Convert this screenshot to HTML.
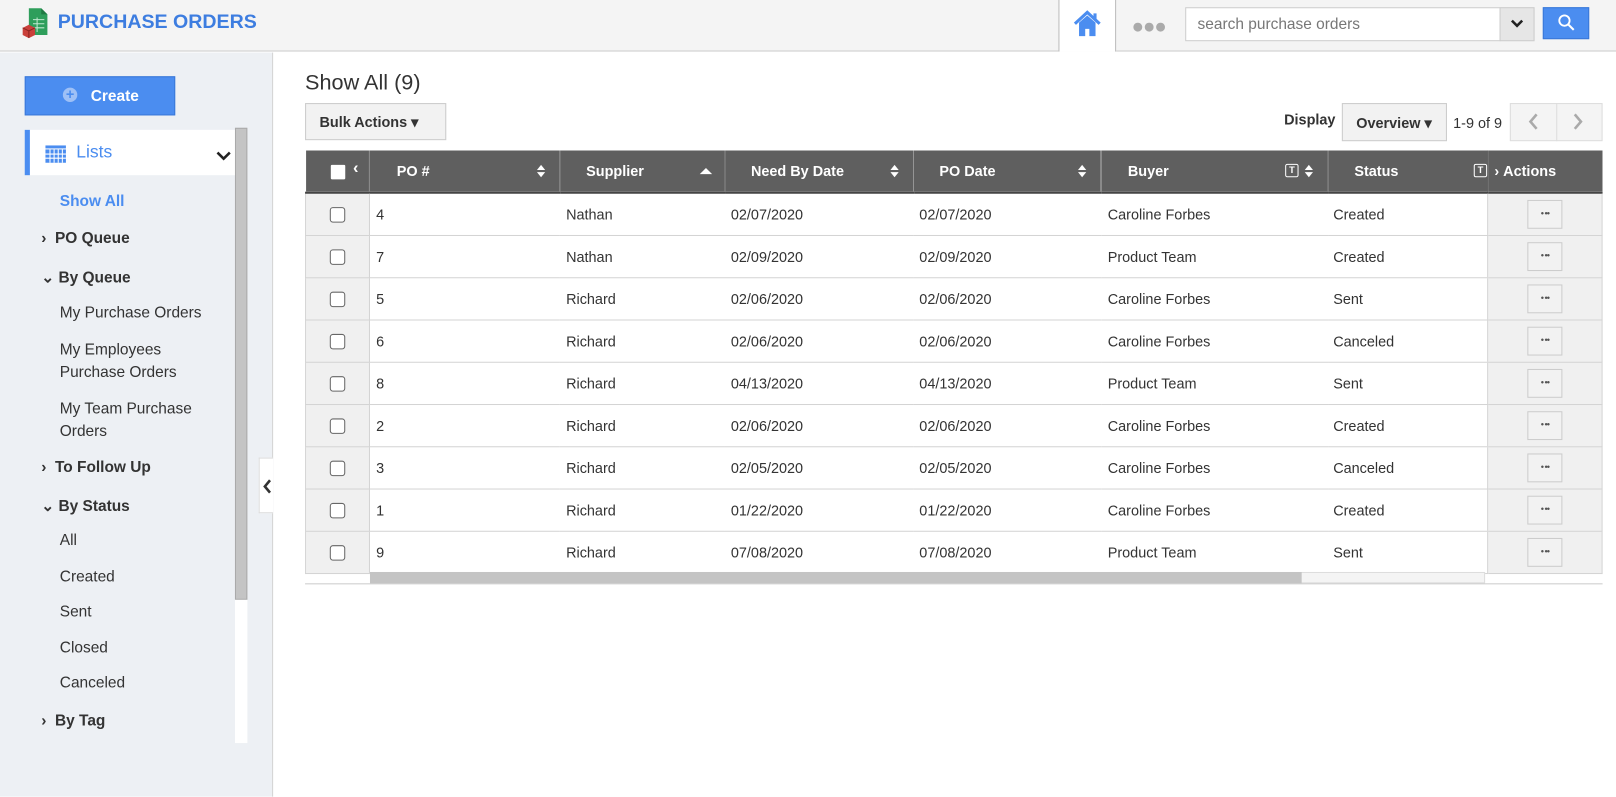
<!DOCTYPE html>
<html><head><meta charset="utf-8"><style>
*{box-sizing:border-box;margin:0;padding:0}
body{width:1616px;height:795px;position:relative;font-family:"Liberation Sans",Arial,sans-serif;background:#fff;overflow:hidden;color:#333}
#w{position:absolute;left:0;top:0;width:1568px;height:772px;transform:scale(1.0306);transform-origin:0 0}
.top{position:absolute;left:0;top:0;width:1568px;height:50px;background:#f4f4f4;border-bottom:1px solid #ccc}
.title{position:absolute;left:56px;top:11px;font-size:19px;font-weight:bold;color:#3d7de0}
.side{position:absolute;left:0;top:51px;width:265px;height:722px;background:#edf0f4;border-right:1px solid #d4d4d4}
.a{position:absolute}
.nav{position:absolute;font-size:15px;color:#333}
.b{font-weight:bold}
th,td{font-size:14px}
table{border-collapse:collapse;position:absolute;left:296px;top:146px;width:1259px}
th{background:#5f5f5f;color:#fff;height:41px;text-align:left;font-weight:bold;border-left:1px solid #888;border-bottom:2px solid #444;position:relative}
td{height:41px;border-bottom:1px solid #d4d4d4;color:#333}
td.cb{background:#f0f0f0;border-left:1px solid #d4d4d4;border-right:1px solid #d4d4d4;text-align:center}
td.ac{background:#f0f0f0;border-left:1px solid #d4d4d4;border-right:1px solid #d4d4d4;text-align:center}
.box{display:inline-block;width:15px;height:15px;border:1px solid #666;border-radius:3px;background:#fff;vertical-align:middle}
.dots{display:inline-block;width:34px;height:28px;border:1px solid #ccc;background:#f2f2f2;font-size:9px;line-height:24px;color:#555;letter-spacing:-1px}
.srt{position:absolute;right:14px;top:14px;width:8px}
.srt:before{content:"";position:absolute;left:0;top:0;border:4px solid transparent;border-bottom:5px solid #fff;border-top:0}
.srt:after{content:"";position:absolute;left:0;top:7px;border:4px solid transparent;border-top:5px solid #fff;border-bottom:0}
.flt{position:absolute;top:13px;width:13px;height:13px;border:1px solid #fff;border-radius:2px;font-size:9px;line-height:11px;text-align:center}
</style></head><body><div id="w">
<div class="top">
<svg class="a" style="left:20px;top:7px" width="28" height="30" viewBox="0 0 28 30"><path d="M8 1h12l6 6v20H8z" fill="#2e9e5b"/><path d="M20 1v6h6" fill="#1f7a43"/><g stroke="#bfe8cf" stroke-width="1"><path d="M12 12h11M12 16h11M12 20h11M16 10v14"/></g><path d="M2 20l6-3 6 3v7l-6 3-6-3z" fill="#c9403a"/><path d="M2 20l6 3 6-3M8 23v7" stroke="#8a2420" fill="none"/></svg>
<div class="title">PURCHASE ORDERS</div>
<div class="a" style="left:1027px;top:0;width:56px;height:50px;background:#fff;border-left:1px solid #bbb;border-right:1px solid #bbb"></div>
<svg class="a" style="left:1041px;top:9px" width="28" height="28" viewBox="0 0 28 28"><path d="M2 14L14 3l12 11" fill="none" stroke="#4b8df0" stroke-width="3"/><path d="M6 13v13h6v-7h4v7h6V13L14 6z" fill="#4b8df0"/><rect x="20" y="4" width="3" height="6" fill="#4b8df0"/></svg>
<div class="a" style="left:1098px;top:15px;font-size:20px;color:#aaa;letter-spacing:-1px">●●●</div>
<div class="a" style="left:1150px;top:7px;width:306px;height:33px;background:#fff;border:1px solid #ccc;font-size:15px;color:#777;padding:7px 11px">search purchase orders</div>
<div class="a" style="left:1455px;top:7px;width:34px;height:33px;background:#e6e6e6;border:1px solid #ccc"></div>
<svg class="a" style="left:1465px;top:17px" width="14" height="12"><path d="M2 3l5 5 5-5" stroke="#222" stroke-width="2.5" fill="none"/></svg>
<div class="a" style="left:1497px;top:7px;width:45px;height:31px;background:#4b8df0;border:1px solid #3a78d8"></div>
<svg class="a" style="left:1511px;top:13px" width="18" height="18"><circle cx="7" cy="7" r="5" stroke="#fff" stroke-width="1.8" fill="none"/><path d="M11 11l5 5" stroke="#fff" stroke-width="2"/></svg>
</div>
<div class="side">
<div class="a" style="left:24px;top:23px;width:146px;height:38px;background:#4b8df0;border:1px solid #3a78d8;color:#fff;font-weight:bold;font-size:15px;padding:10px 0 0 63px">Create</div>
<div class="a" style="left:61px;top:34px;width:14px;height:14px;border-radius:50%;background:#9ec0f6;color:#4b8df0;font-size:14px;line-height:13px;text-align:center;font-weight:bold">+</div>
<div class="a" style="left:24px;top:75px;width:204px;height:44px;background:#fff;border-left:5px solid #4b8df0"></div>
<svg class="a" style="left:44px;top:90px" width="20" height="17"><rect width="20" height="3" fill="#4b8df0"/><g fill="#4b8df0"><rect y="4" width="20" height="13"/></g><g stroke="#fff" stroke-width="1"><path d="M0 8.5h20M0 12.5h20M4.5 4v13M8.5 4v13M12.5 4v13M16.5 4v13"/></g></svg>
<div class="nav" style="left:74px;top:87px;font-size:17px;color:#4b8df0">Lists</div>
<svg class="a" style="left:210px;top:95px" width="14" height="10"><path d="M1 2l6 6 6-6" stroke="#222" stroke-width="2.5" fill="none"/></svg>
<div class="a" style="left:228px;top:73px;width:12px;height:458px;background:#c4c4c4;border:1px solid #aaa"></div>
<div class="a" style="left:228px;top:531px;width:12px;height:139px;background:#fff"></div>
<div class="nav b" style="left:58px;top:136px;color:#4b8df0">Show All</div>
<div class="nav b" style="left:40px;top:172px">›&nbsp; PO Queue</div>
<div class="nav b" style="left:40px;top:209px">⌄ By Queue</div>
<div class="nav" style="left:58px;top:244px">My Purchase Orders</div>
<div class="nav" style="left:58px;top:278px;line-height:22px">My Employees<br>Purchase Orders</div>
<div class="nav" style="left:58px;top:335px;line-height:22px">My Team Purchase<br>Orders</div>
<div class="nav b" style="left:40px;top:394px">›&nbsp; To Follow Up</div>
<div class="nav b" style="left:40px;top:431px">⌄ By Status</div>
<div class="nav" style="left:58px;top:465px">All</div>
<div class="nav" style="left:58px;top:500px">Created</div>
<div class="nav" style="left:58px;top:534px">Sent</div>
<div class="nav" style="left:58px;top:569px">Closed</div>
<div class="nav" style="left:58px;top:603px">Canceled</div>
<div class="nav b" style="left:40px;top:640px">›&nbsp; By Tag</div>
<div class="a" style="left:251px;top:393px;width:14px;height:54px;background:#fff;border:1px solid #ddd;border-right:0"></div>
<svg class="a" style="left:254px;top:414px" width="10" height="14"><path d="M8 1L3 7l5 6" stroke="#333" stroke-width="2.5" fill="none"/></svg>
</div>
<div class="a" style="left:296px;top:69px;font-size:21px;color:#333">Show All (9)</div>
<div class="a" style="left:296px;top:100px;width:137px;height:36px;background:#f2f2f2;border:1px solid #ccc;font-size:14px;font-weight:bold;padding:9px 13px">Bulk Actions ▾</div>
<div class="a" style="left:1246px;top:108px;font-size:14px;font-weight:bold">Display</div>
<div class="a" style="left:1302px;top:100px;width:102px;height:37px;background:#f2f2f2;border:1px solid #ccc;font-size:14px;font-weight:bold;padding:10px 13px">Overview ▾</div>
<div class="a" style="left:1410px;top:111px;font-size:14px">1-9 of 9</div>
<div class="a" style="left:1465px;top:100px;width:90px;height:37px;background:#f4f4f4;border:1px solid #ddd"></div>
<div class="a" style="left:1510px;top:100px;width:1px;height:37px;background:#ddd"></div>
<svg class="a" style="left:1482px;top:109px" width="12" height="18"><path d="M9 2L3 9l6 7" stroke="#aaa" stroke-width="2.5" fill="none"/></svg>
<svg class="a" style="left:1525px;top:109px" width="12" height="18"><path d="M3 2l6 7-6 7" stroke="#aaa" stroke-width="2.5" fill="none"/></svg>
<table>
<tr><th style="width:62px;border-left:0"><span class="box" style="border:0;border-radius:1px;width:14px;height:14px;margin-left:24px"></span><span style="position:absolute;left:46px;top:9px;font-size:16px">‹</span></th>
<th style="width:185px;padding-left:26px">PO #<span class="srt"></span></th>
<th style="width:160px;padding-left:25px">Supplier<span style="position:absolute;right:12px;top:17px;border:6px solid transparent;border-bottom:6px solid #fff;border-top:0"></span></th>
<th style="width:183px;padding-left:25px">Need By Date<span class="srt"></span></th>
<th style="width:183px;padding-left:25px">PO Date<span class="srt"></span></th>
<th style="width:220px;padding-left:25px">Buyer<span class="flt" style="right:28px">T</span><span class="srt"></span></th>
<th style="width:155px;padding-left:25px">Status<span class="flt" style="right:0">T</span></th>
<th style="width:111px;padding-left:6px;border-left:1px solid #444">›&nbsp;Actions</th></tr>
<tr><td class="cb"><span class="box"></span></td><td style="padding-left:6px">4</td><td style="padding-left:6px">Nathan</td><td style="padding-left:6px">02/07/2020</td><td style="padding-left:6px">02/07/2020</td><td style="padding-left:6px">Caroline Forbes</td><td style="padding-left:5px">Created</td><td class="ac"><span class="dots">• ••</span></td></tr>
<tr><td class="cb"><span class="box"></span></td><td style="padding-left:6px">7</td><td style="padding-left:6px">Nathan</td><td style="padding-left:6px">02/09/2020</td><td style="padding-left:6px">02/09/2020</td><td style="padding-left:6px">Product Team</td><td style="padding-left:5px">Created</td><td class="ac"><span class="dots">• ••</span></td></tr>
<tr><td class="cb"><span class="box"></span></td><td style="padding-left:6px">5</td><td style="padding-left:6px">Richard</td><td style="padding-left:6px">02/06/2020</td><td style="padding-left:6px">02/06/2020</td><td style="padding-left:6px">Caroline Forbes</td><td style="padding-left:5px">Sent</td><td class="ac"><span class="dots">• ••</span></td></tr>
<tr><td class="cb"><span class="box"></span></td><td style="padding-left:6px">6</td><td style="padding-left:6px">Richard</td><td style="padding-left:6px">02/06/2020</td><td style="padding-left:6px">02/06/2020</td><td style="padding-left:6px">Caroline Forbes</td><td style="padding-left:5px">Canceled</td><td class="ac"><span class="dots">• ••</span></td></tr>
<tr><td class="cb"><span class="box"></span></td><td style="padding-left:6px">8</td><td style="padding-left:6px">Richard</td><td style="padding-left:6px">04/13/2020</td><td style="padding-left:6px">04/13/2020</td><td style="padding-left:6px">Product Team</td><td style="padding-left:5px">Sent</td><td class="ac"><span class="dots">• ••</span></td></tr>
<tr><td class="cb"><span class="box"></span></td><td style="padding-left:6px">2</td><td style="padding-left:6px">Richard</td><td style="padding-left:6px">02/06/2020</td><td style="padding-left:6px">02/06/2020</td><td style="padding-left:6px">Caroline Forbes</td><td style="padding-left:5px">Created</td><td class="ac"><span class="dots">• ••</span></td></tr>
<tr><td class="cb"><span class="box"></span></td><td style="padding-left:6px">3</td><td style="padding-left:6px">Richard</td><td style="padding-left:6px">02/05/2020</td><td style="padding-left:6px">02/05/2020</td><td style="padding-left:6px">Caroline Forbes</td><td style="padding-left:5px">Canceled</td><td class="ac"><span class="dots">• ••</span></td></tr>
<tr><td class="cb"><span class="box"></span></td><td style="padding-left:6px">1</td><td style="padding-left:6px">Richard</td><td style="padding-left:6px">01/22/2020</td><td style="padding-left:6px">01/22/2020</td><td style="padding-left:6px">Caroline Forbes</td><td style="padding-left:5px">Created</td><td class="ac"><span class="dots">• ••</span></td></tr>
<tr><td class="cb"><span class="box"></span></td><td style="padding-left:6px">9</td><td style="padding-left:6px">Richard</td><td style="padding-left:6px">07/08/2020</td><td style="padding-left:6px">07/08/2020</td><td style="padding-left:6px">Product Team</td><td style="padding-left:5px">Sent</td><td class="ac"><span class="dots">• ••</span></td></tr>
</table>
<div class="a" style="left:359px;top:555px;width:1082px;height:11px;background:#f4f4f4;border:1px solid #ddd"></div>
<div class="a" style="left:359px;top:555px;width:904px;height:11px;background:#c4c4c4"></div>
<div class="a" style="left:296px;top:566px;width:1259px;height:1px;background:#ccc"></div>
</div></body></html>
